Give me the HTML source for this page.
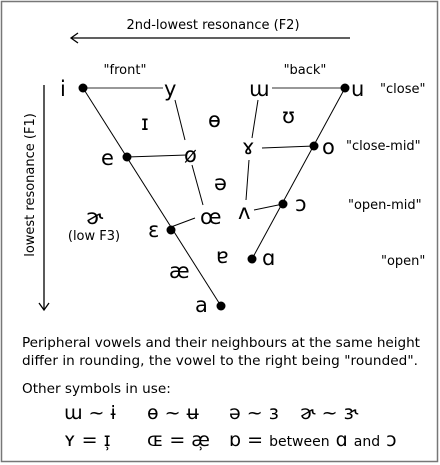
<!DOCTYPE html>
<html><head><meta charset="utf-8"><style>
body{margin:0;background:#fff;width:440px;height:465px;overflow:hidden}
svg{display:block}
text{font-family:"DejaVu Sans","Liberation Sans",sans-serif;fill:#000}
.l{font-size:21px}
.s{font-size:13px}
.b{font-size:13.6px}
</style></head><body>
<svg width="440" height="465" viewBox="0 0 440 465">
<rect x="1.5" y="1.5" width="436" height="460" fill="#fff" stroke="#777" stroke-width="1.5"/>
<text x="213" y="29" class="s" text-anchor="middle">2nd-lowest resonance (F2)</text>
<line x1="72" y1="38" x2="350" y2="38" stroke="#000" stroke-width="1.3"/>
<path d="M78 33 L71 38 L78 43" fill="none" stroke="#000" stroke-width="1.3"/>
<line x1="44" y1="85" x2="44" y2="310" stroke="#000" stroke-width="1.3"/>
<path d="M39 303 L44 310 L49 303" fill="none" stroke="#000" stroke-width="1.3"/>
<text transform="translate(34,185) rotate(-90)" class="s" text-anchor="middle">lowest resonance (F1)</text>
<g stroke="#777" stroke-width="1.5">
<line x1="83" y1="88" x2="163" y2="88"/><line x1="272" y1="88" x2="345" y2="88"/>
</g>
<g stroke="#000" stroke-width="1">
<line x1="127" y1="157" x2="187" y2="155"/>
<line x1="83" y1="88" x2="221" y2="306"/>
<line x1="345" y1="88" x2="252" y2="259"/>
<line x1="175" y1="100" x2="185" y2="140"/>
<line x1="192" y1="165" x2="203" y2="205"/>
<line x1="171" y1="227" x2="195" y2="218"/>
<line x1="258" y1="100" x2="252" y2="138"/>
<line x1="262" y1="148" x2="314" y2="146"/>
<line x1="249" y1="160" x2="246" y2="200"/>
<line x1="254" y1="210" x2="283" y2="204"/>
</g>
<g fill="#000">
<circle cx="83" cy="88" r="4.5"/><circle cx="345" cy="88" r="4.5"/><circle cx="127" cy="157" r="4.5"/><circle cx="314" cy="146" r="4.5"/><circle cx="171" cy="230" r="4.5"/><circle cx="283" cy="204" r="4.5"/><circle cx="252" cy="259" r="4.5"/><circle cx="221" cy="306" r="4.5"/>
</g>
<text x="125" y="74" class="s" text-anchor="middle">"front"</text>
<text x="305" y="74" class="s" text-anchor="middle">"back"</text>
<text x="380" y="93" class="s">"close"</text>
<text x="346" y="150" class="s">"close-mid"</text>
<text x="348" y="209" class="s">"open-mid"</text>
<text x="381" y="265" class="s">"open"</text>
<text x="94" y="240" class="s" text-anchor="middle">(low F3)</text>
<g class="l">
<text x="60" y="96">i</text><text x="164" y="96">y</text><text x="249" y="96">ɯ</text><text x="351" y="96">u</text>
<text x="141" y="130">ɪ</text><text x="208" y="127">ɵ</text><text x="282" y="123">ʊ</text>
<text x="101" y="165">e</text><text x="184" y="162">ø</text><text x="242" y="154">ɤ</text><text x="322" y="154">o</text>
<text x="214" y="190">ə</text><text x="238" y="219">ʌ</text><text x="295" y="211">ɔ</text>
<text x="86" y="224">ɚ</text><text x="148" y="237">ɛ</text><text x="200" y="224">œ</text>
<text x="216" y="263">ɐ</text><text x="262" y="265">ɑ</text><text x="169" y="278">æ</text><text x="195" y="312">a</text>
</g>
<g class="b">
<text x="22" y="347" textLength="398">Peripheral vowels and their neighbours at the same height</text>
<text x="22" y="365" textLength="396">differ in rounding, the vowel to the right being "rounded".</text>
<text x="22" y="393">Other symbols in use:</text>
</g>
<g style="font-size:19px">
<text x="64" y="419">ɯ ~ ɨ</text><text x="147" y="419">ɵ ~ ʉ</text><text x="229" y="419">ə ~ ɜ</text><text x="300" y="419">ɚ ~ ɝ</text>
<text x="64" y="446">ʏ = ɪ̹</text><text x="147" y="446">ɶ = æ̹</text><text x="229" y="446">ɒ = <tspan style="font-size:14px">between</tspan> ɑ <tspan style="font-size:14px">and</tspan> ɔ</text>
</g>
</svg>
</body></html>
